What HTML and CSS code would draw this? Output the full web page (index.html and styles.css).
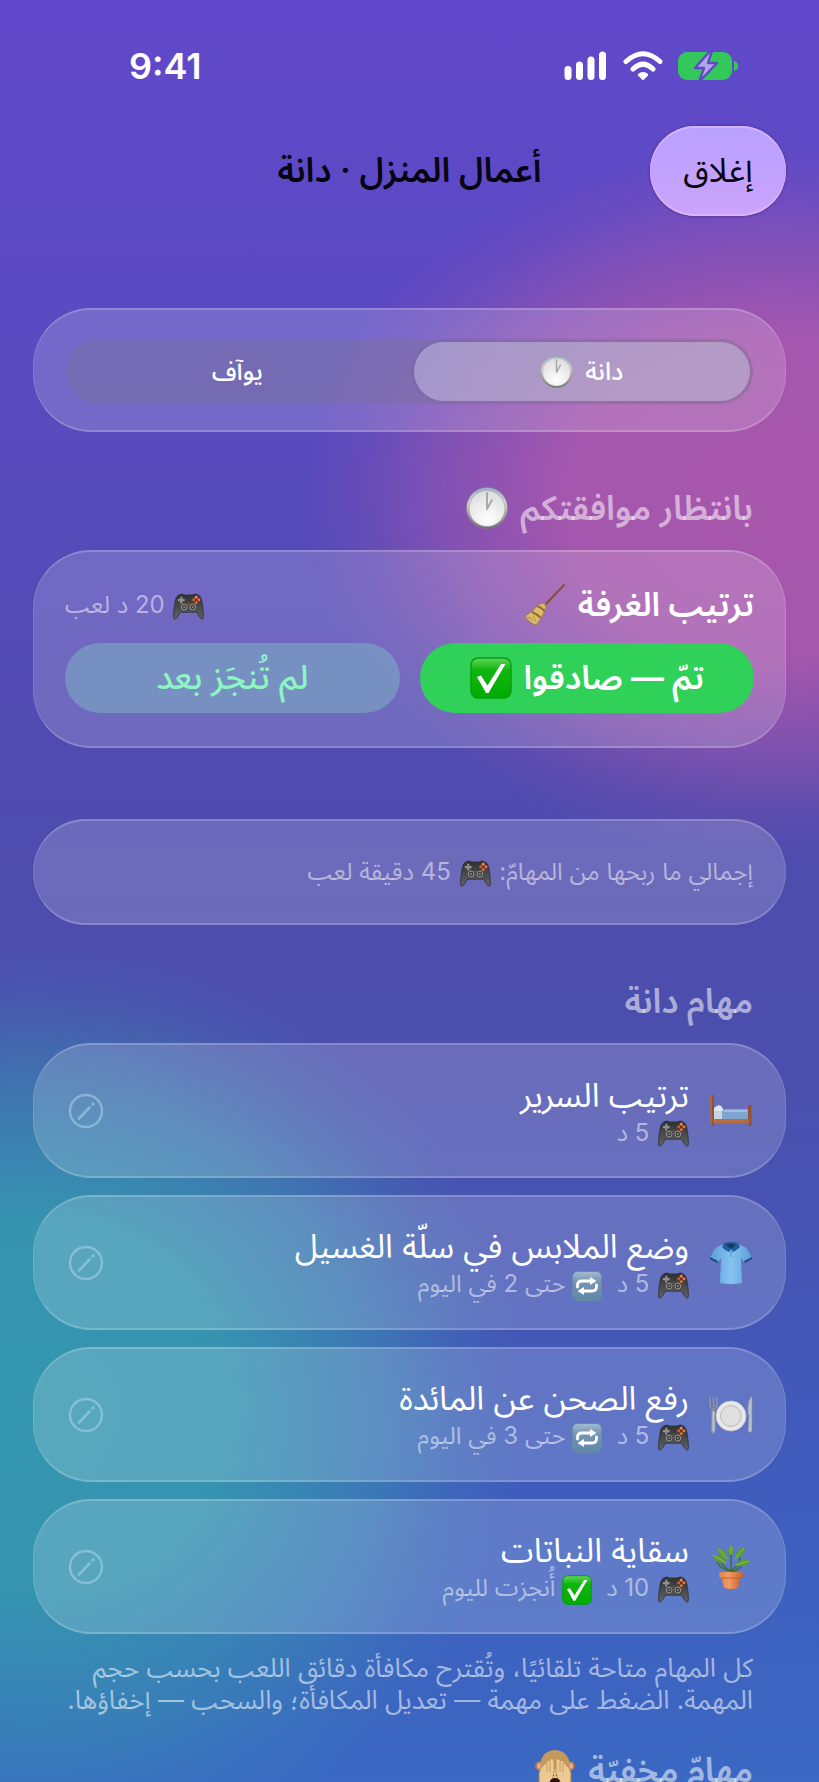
FILE: index.html
```
<!DOCTYPE html>
<html lang="ar" dir="rtl">
<head>
  <meta charset="UTF-8">
  <meta name="viewport" content="width=device-width, initial-scale=1">
  <title>أعمال المنزل · دانة</title>
  <link rel="stylesheet" href="styles.css">
</head>
<body>
<!-- shared icons -->
<svg class="sprite" aria-hidden="true">
  <defs>
    <radialGradient id="faceFill" cx="50%" cy="80%" r="80%"><stop offset="0" stop-color="#fff"/><stop offset="1" stop-color="#dcdcdc"/></radialGradient>
    <linearGradient id="rimFill" x1="0" y1="0" x2="0" y2="1"><stop offset="0" stop-color="#9db0cf"/><stop offset=".4" stop-color="#d5d5d5"/><stop offset="1" stop-color="#6e6e6e"/></linearGradient>
    <linearGradient id="padFill" x1="0" y1="0" x2="0" y2="1"><stop offset="0" stop-color="#2f3030"/><stop offset="1" stop-color="#626262"/></linearGradient>
    <linearGradient id="greenFill" x1="0" y1="0" x2="0" y2="1"><stop offset="0" stop-color="#5fd65a"/><stop offset=".3" stop-color="#0fb50f"/><stop offset="1" stop-color="#00ad00"/></linearGradient>
    <linearGradient id="blueFill" x1="0" y1="0" x2="0" y2="1"><stop offset="0" stop-color="#a3bcd2"/><stop offset=".35" stop-color="#7795b4"/><stop offset="1" stop-color="#5f87a8"/></linearGradient>
    <linearGradient id="shirtFill" x1="0" y1="0" x2="1" y2="0"><stop offset="0" stop-color="#5a9fda"/><stop offset=".5" stop-color="#86c3f0"/><stop offset="1" stop-color="#5a9fda"/></linearGradient>
    <linearGradient id="potFill" x1="0" y1="0" x2="1" y2="0"><stop offset="0" stop-color="#e08247"/><stop offset=".4" stop-color="#f49a62"/><stop offset="1" stop-color="#c7632e"/></linearGradient>
  </defs>
  <symbol id="clock" viewBox="0 0 42 42">
    <circle cx="21" cy="21" r="20.500" fill="url(#rimFill)" stroke="#888" stroke-width=".5"/>
    <circle cx="21" cy="21.500" r="18" fill="url(#faceFill)" stroke="#999" stroke-width=".6"/>
    <path d="M21 6v16l5-9" fill="none" stroke="#aaa" stroke-width="2" stroke-linecap="round" stroke-linejoin="round"/>
  </symbol>
  <symbol id="pad" viewBox="0 0 32 28">
    <path d="M6 2Q9 0 12 2h8Q23 0 26 2q3 1 4 7 1.500 9 1.500 15 0 4-2 3-2-1-5-7h-17q-3 6-5 7-2 1-2-3Q.5 18 2 9 3 3 6 2z" fill="url(#padFill)" stroke="#28292b" stroke-width=".7"/>
    <path d="M8.500 4v7M5 7.500h7" stroke="#909090" stroke-width="2.300"/>
    <circle cx="24" cy="4.300" r="1.600" fill="#ff7a3c"/><circle cx="21.400" cy="7" r="1.600" fill="#d65a2c"/><circle cx="26.800" cy="7" r="1.600" fill="#ff6a2a"/><circle cx="24" cy="9.800" r="1.600" fill="#f06428"/>
    <circle cx="11.500" cy="14.500" r="3" fill="#3c3d3d" stroke="#9a9a9a" stroke-width="1"/><circle cx="20.500" cy="14.500" r="3" fill="#3c3d3d" stroke="#9a9a9a" stroke-width="1"/>
    <circle cx="11.500" cy="14.500" r="1.100" fill="#888"/><circle cx="20.500" cy="14.500" r="1.100" fill="#888"/><circle cx="16" cy="11.500" r=".9" fill="#cc4a2a"/>
  </symbol>
  <symbol id="check" viewBox="0 0 42 42">
    <rect x="1" y="1" width="40" height="40" rx="7" fill="url(#greenFill)" stroke="#0a9a12" stroke-width="1.400"/>
    <path d="M7 20l4-1.500 6.500 10L31 7h4.500L18.500 36h-2.500z" fill="#fff"/>
  </symbol>
  <symbol id="repeat" viewBox="0 0 30 30">
    <rect x=".5" y=".5" width="29" height="29" rx="5" fill="url(#blueFill)" stroke="#668aa9" stroke-width="1"/>
    <path d="M5.500 16v-1.500Q5.500 10 10 10h9M24.500 14v1.500q0 4.500-4.500 4.500h-9" fill="none" stroke="#fff" stroke-width="2.800" stroke-linecap="round"/>
    <path d="M18 6l6.500 4-6.500 4zM12 16l-6.500 4 6.500 4z" fill="#fff"/>
  </symbol>
  <symbol id="broom" viewBox="0 0 42 42">
    <path d="M40 1L20 22" stroke="#8a5138" stroke-width="2.200" stroke-linecap="round"/>
    <path d="M14 21q4-3 7-1 2 3-.5 7Q17 36 12 41 5 39 1 32q8-4 13-11z" fill="#d8bd6c" stroke="#9b7a35" stroke-width=".8"/>
    <path d="M13 22q4 1 7.500 5M8 28q5 2 9 6" stroke="#9a6e33" stroke-width="2" fill="none"/>
    <path d="M5 32l4 5M9 31l3 7M3 32l3 3" stroke="#ad8a3e" stroke-width=".8"/>
  </symbol>
  <symbol id="bed" viewBox="0 0 44 44">
    <path d="M5 19q5-5 8-1l2 4H5z" fill="#dde7f3"/>
    <path d="M5 22h8v9H5z" fill="#c9d4e0"/><path d="M13 22q1-2 4-2h22v11H13z" fill="#7da5cf"/><path d="M14 21h24v2H15z" fill="#9dc0e2"/>
    <path d="M1 6h4v31H2zM39 16h3.500v21H40l-1-4z" fill="#96512e"/><path d="M4 30h36v4H4z" fill="#b76b42"/><path d="M2 6v30" stroke="#c27b50"/>
  </symbol>
  <symbol id="shirt" viewBox="0 0 44 44">
    <path d="M15 3L8 6Q5 8 1 17l8 4 3-4-1 25q11 2 22 0l-1-25 3 4 8-4Q39 8 36 6l-7-3q-7 4-14 0z" fill="url(#shirtFill)"/>
    <path d="M1 16l8 4-1 2-7-4zM43 16l-8 4 1 2 7-4z" fill="#174a85"/>
    <path d="M15 2q7-2 14 0l2 4q-4 4-7 5l-2-3-2 3q-4-1-7-5z" fill="#215e9e"/><path d="M17 3q5-1 10 0-2 4-5 5-3-1-5-5z" fill="#123c6b"/>
    <path d="M22 9v7" stroke="#4b8cc5"/>
  </symbol>
  <symbol id="plate" viewBox="0 0 44 44">
    <circle cx="22" cy="23" r="15" fill="#e9e9e9" stroke="#c4c4c4" stroke-width=".8"/>
    <circle cx="22" cy="23" r="10.500" fill="#dfdfdf" stroke="#bbb" stroke-width="1"/>
    <path d="M1 4v8q0 3 2.500 4L2.500 38q1 4 3.500 0L5 16q3-1 3-4V4M4.500 4v10" fill="none" stroke="#8a93a0" stroke-width="1.600"/>
    <path d="M3 18h3v20q-2 3-3 0zM43 3q-5 4-4 19h1l-1 16q2 3 4 0z" fill="#b8c0cb" stroke="#808997" stroke-width=".6"/>
  </symbol>
  <symbol id="plant" viewBox="0 0 44 44">
    <path d="M22 29V9M22 26Q15 23 12 17M22 26Q12 25 8 17M22 26q9-6 9-14M22 27q8-2 12-8" stroke="#3c6f33" stroke-width="1.500" fill="none"/>
    <path d="M20 9q-3-4 2-9 5 5 2 9-2 2-4 0zM18 14Q9 14 9 3q9 2 9 11zM26 14q0-10 10-12 0 10-10 12zM17 18Q7 19 3 10q11-1 14 8zM27 20q4-7 14-4-4 8-14 4z" fill="#5d9e32"/>
    <path d="M22 1v8M10 4l8 10M35 3l-9 11M4 10l13 8M40 16l-13 4" stroke="#82bf52"/>
    <path d="M12 31h20l-3 12q-7 2-14 0z" fill="url(#potFill)"/><rect x="10" y="27" width="24" height="6" rx="2" fill="url(#potFill)"/><path d="M13 33h18" stroke="#b45a29" stroke-width=".8"/>
  </symbol>
  <symbol id="monkey" viewBox="0 0 40 42">
    <circle cx="5" cy="17" r="5" fill="#a97b4b"/><circle cx="35" cy="17" r="5" fill="#a97b4b"/><circle cx="5" cy="17" r="3" fill="#f3a7a0"/><circle cx="35" cy="17" r="3" fill="#f3a7a0"/>
    <path d="M20 1q15 1 15 18l2 17q-5 6-17 6T3 36l2-17Q5 2 20 1z" fill="#c29a5c"/>
    <path d="M20 20q10 0 12 10-2 9-12 9T8 30q2-10 12-10z" fill="#e8c692"/>
    <path d="M5 40L4 25q1-7 6-10l2-4 2 1 3-3 2 3v11q-1 9-7 11zM35 40l1-15q-1-7-6-10l-2-4-2 1-3-3-2 3v11q1 9 7 11z" fill="#edca94" stroke="#bd8d50" stroke-width=".8"/>
    <path d="M12 13v10M15 12v11M28 13v10M25 12v11" stroke="#bd8d50" stroke-width=".8"/>
    <path d="M18 26l1 1M22 26l-1 1" stroke="#70492a"/><ellipse cx="20" cy="33" rx="5" ry="4" fill="#26120b"/>
  </symbol>
  <symbol id="pencil" viewBox="0 0 36 36">
    <circle cx="18" cy="18" r="16" fill="none" stroke="currentColor" stroke-width="2.500"/>
    <path d="M11 25.500L21.500 14.500" stroke="currentColor" stroke-width="2.800" stroke-linecap="round"/><circle cx="25" cy="11" r="1.800" fill="currentColor"/>
  </symbol>
</svg>

<div class="screen">
  <div class="status-bar" dir="ltr">
    <span class="time">9:41</span>
    <div class="status-icons">
      <svg width="44" height="30" viewBox="0 0 44 30"><path d="M4 18.500v7M15.500 14v11.500M27 9v16.500M38.500 4v21.500" stroke="#fff" stroke-width="7" stroke-linecap="round"/></svg>
      <svg width="40" height="30" viewBox="0 0 40 30"><path d="M3 10.500Q20-5 37 10.500M10 18q10-9.500 20 0" fill="none" stroke="#fff" stroke-width="5" stroke-linecap="round"/><path d="M20 29.500l-5-5q-1-2.500 5-3.500 6 1 5 3.500z" fill="#fff"/></svg>
      <svg width="60" height="30" viewBox="0 0 60 30"><rect y="1" width="54" height="28" rx="9" fill="#34c759"/><path d="M56 10q4 1 4 5t-4 5z" fill="#34c759"/><path d="M33-1L17 17h9l-5 14 18-19h-9l4-12z" fill="#b3a4ea" stroke="#6049c8" stroke-width="2.400" stroke-linejoin="round"/></svg>
    </div>
  </div>

  <header class="nav">
    <button class="close-btn" type="button">إغلاق</button>
    <h1>أعمال المنزل · دانة</h1>
  </header>

  <main>
    <div class="card switch-card">
      <div class="segmented" role="tablist">
        <button type="button" role="tab" aria-selected="true" class="segment active"><span>دانة</span><svg class="icon-seg"><use href="#clock"/></svg></button>
        <button type="button" role="tab" aria-selected="false" class="segment">يوآف</button>
      </div>
    </div>

    <h2>بانتظار موافقتكم <svg class="icon-head"><use href="#clock"/></svg></h2>
    <section class="card approval">
      <div class="approval-row">
        <h3>ترتيب الغرفة <svg class="icon-head"><use href="#broom"/></svg></h3>
        <span class="muted"><svg class="icon-pad"><use href="#pad"/></svg> 20 د لعب</span>
      </div>
      <div class="approval-actions">
        <button type="button" class="btn btn-done">تمّ — صادقوا <svg class="icon-head"><use href="#check"/></svg></button>
        <button type="button" class="btn btn-not-yet">لم تُنجَز بعد</button>
      </div>
    </section>

    <p class="card total muted">إجمالي ما ربحها من المهامّ: <svg class="icon-pad"><use href="#pad"/></svg> 45 دقيقة لعب</p>

    <h2>مهام دانة</h2>
    <div class="tasks">
      <article class="card task">
        <svg class="icon-task"><use href="#bed"/></svg>
        <div class="task-text">
          <h3>ترتيب السرير</h3>
          <p class="muted"><span><svg class="icon-pad"><use href="#pad"/></svg> 5 د</span></p>
        </div>
        <button type="button" class="edit-btn" aria-label="تعديل"><svg><use href="#pencil"/></svg></button>
      </article>
      <article class="card task">
        <svg class="icon-task"><use href="#shirt"/></svg>
        <div class="task-text">
          <h3>وضع الملابس في سلّة الغسيل</h3>
          <p class="muted"><span><svg class="icon-pad"><use href="#pad"/></svg> 5 د</span><span><svg class="icon-box"><use href="#repeat"/></svg> حتى 2 في اليوم</span></p>
        </div>
        <button type="button" class="edit-btn" aria-label="تعديل"><svg><use href="#pencil"/></svg></button>
      </article>
      <article class="card task">
        <svg class="icon-task"><use href="#plate"/></svg>
        <div class="task-text">
          <h3>رفع الصحن عن المائدة</h3>
          <p class="muted"><span><svg class="icon-pad"><use href="#pad"/></svg> 5 د</span><span><svg class="icon-box"><use href="#repeat"/></svg> حتى 3 في اليوم</span></p>
        </div>
        <button type="button" class="edit-btn" aria-label="تعديل"><svg><use href="#pencil"/></svg></button>
      </article>
      <article class="card task">
        <svg class="icon-task"><use href="#plant"/></svg>
        <div class="task-text">
          <h3>سقاية النباتات</h3>
          <p class="muted"><span><svg class="icon-pad"><use href="#pad"/></svg> 10 د</span><span><svg class="icon-box"><use href="#check"/></svg> أُنجزت لليوم</span></p>
        </div>
        <button type="button" class="edit-btn" aria-label="تعديل"><svg><use href="#pencil"/></svg></button>
      </article>
    </div>
    <p class="hint">كل المهام متاحة تلقائيًا، وتُقترح مكافأة دقائق اللعب بحسب حجم المهمة. الضغط على مهمة — تعديل المكافأة؛ والسحب — إخفاؤها.</p>

    <h2 class="hidden-title">مهامّ مخفيّة <svg class="icon-head"><use href="#monkey"/></svg></h2>
  </main>
</div>
</body>
</html>
```
FILE: styles.css
```
* { box-sizing: border-box; }
body { margin: 0; }
body, button { font-family: Inter, "Noto Sans Arabic", "Noto Sans", "DejaVu Sans", sans-serif; }
button { border: none; padding: 0; cursor: pointer; }
h1, h2, h3, p { margin: 0; font-weight: 400; }
.sprite { position: absolute; width: 0; height: 0; }

.screen {
  height: 100vh;
  overflow: hidden;
  color: #fff;
  background:
    radial-gradient(ellipse 58% 20% at 95% 28%, rgba(172, 88, 172, 0.95) 0%, rgba(172, 88, 172, 0.9) 45%, rgba(172, 88, 172, 0.5) 70%, rgba(172, 88, 172, 0.15) 88%, transparent 100%),
    radial-gradient(ellipse 60% 26% at 4% 79%, #3597b0 0%, rgba(53, 151, 176, 0.95) 40%, rgba(53, 151, 176, 0.5) 70%, rgba(53, 151, 176, 0.15) 88%, transparent 100%),
    linear-gradient(#6049cb 0%, #5a4abf 22%, #4f4bae 45%, #4b4fad 60%, #415abb 80%, #3a68c2 100%);
}

.status-bar {
  display: flex;
  justify-content: space-between;
  align-items: center;
  height: 126px;
  padding: 6px 81px 0 129px;
}
.time { font-size: 36px; font-weight: 600; }
.status-icons { display: flex; align-items: center; gap: 15px; }

.nav {
  display: grid;
  grid-template-columns: 136px 1fr 136px;
  align-items: center;
  padding: 0 33px;
}
.nav h1 { font-size: 34px; font-weight: 600; color: #060410; text-align: center; }
.close-btn {
  height: 90px;
  border-radius: 45px;
  font-size: 33px;
  color: #060410;
  background: linear-gradient(#b9a0ff, #cba4fc);
  box-shadow: inset 0 2px 1px #d3b5ff, inset 0 -2px 1px #e0b5fb, 0 0 2px 1px #5a3aa0;
}

main { padding: 92px 33px 0; }
.card {
  background: rgba(255, 255, 255, 0.17);
  border: 1px solid rgba(255, 255, 255, 0.12);
  border-top: 2px solid rgba(255, 255, 255, 0.2);
  border-bottom: 2px solid rgba(255, 255, 255, 0.2);
  border-radius: 58px;
}
.switch-card { padding: 29px 32px 26px; }
.segmented {
  display: grid;
  grid-template-columns: 1fr 1fr;
  gap: 8px;
  padding: 3px;
  border-radius: 33px;
  background: rgba(120, 115, 140, 0.36);
}
.segment {
  display: flex;
  align-items: center;
  justify-content: center;
  gap: 12px;
  height: 59px;
  border-radius: 30px;
  color: #fff;
  font-size: 25px;
  font-weight: 500;
  background: none;
}
.segment.active { background: rgba(215, 215, 240, 0.4); box-shadow: 0 0 5px rgba(60, 40, 90, 0.15); }

h2 {
  display: flex;
  align-items: center;
  gap: 12px;
  margin: 50px 33px 16px;
  font-size: 34px;
  font-weight: 600;
  line-height: 52px;
  color: rgba(255, 255, 255, 0.55);
}
.muted { font-size: 24px; line-height: 32px; color: rgba(255, 255, 255, 0.5); }
.icon-seg { width: 33px; height: 33px; }
.icon-head { width: 42px; height: 42px; }
.icon-pad { width: 31px; height: 27px; margin-inline-end: 2px; }
.icon-box { width: 30px; height: 30px; }
.muted svg { vertical-align: middle; }

.approval { padding: 28px 31px 33px; }
.approval-row { display: flex; justify-content: space-between; align-items: center; height: 50px; margin-bottom: 13px; }
.approval h3 { display: flex; align-items: center; gap: 12px; font-size: 33px; font-weight: 600; }
.approval-actions { display: grid; grid-template-columns: 1fr 1fr; gap: 20px; }
.btn {
  display: flex;
  align-items: center;
  justify-content: center;
  gap: 12px;
  height: 70px;
  border-radius: 35px;
  font-size: 33px;
}
.btn-done { color: #fff; font-weight: 600; background: #30d158; }
.btn-not-yet { color: #8cf5c0; font-size: 34px; font-weight: 500; background: rgba(124, 184, 196, 0.5); }

.total { margin-top: 71px; padding: 35px 32px; }
.total .icon-pad { margin-inline-start: 2px; }

.tasks { display: grid; gap: 17px; }
.task { display: flex; align-items: center; gap: 20px; height: 135px; padding: 0 32px; }
.icon-task { flex: none; width: 44px; height: 44px; }
.task-text { flex: 1; }
.task h3 { font-size: 33px; line-height: 44px; }
.task .muted { display: flex; gap: 14px; }
.edit-btn { width: 40px; height: 40px; color: rgba(180, 215, 240, 0.5); background: none; }
.edit-btn svg { display: block; width: 36px; height: 36px; margin: auto; }

.hint { margin: 18px 33px 0; font-size: 26px; line-height: 32px; color: rgba(255, 255, 255, 0.55); }
.hidden-title { margin-top: 28px; }
```
